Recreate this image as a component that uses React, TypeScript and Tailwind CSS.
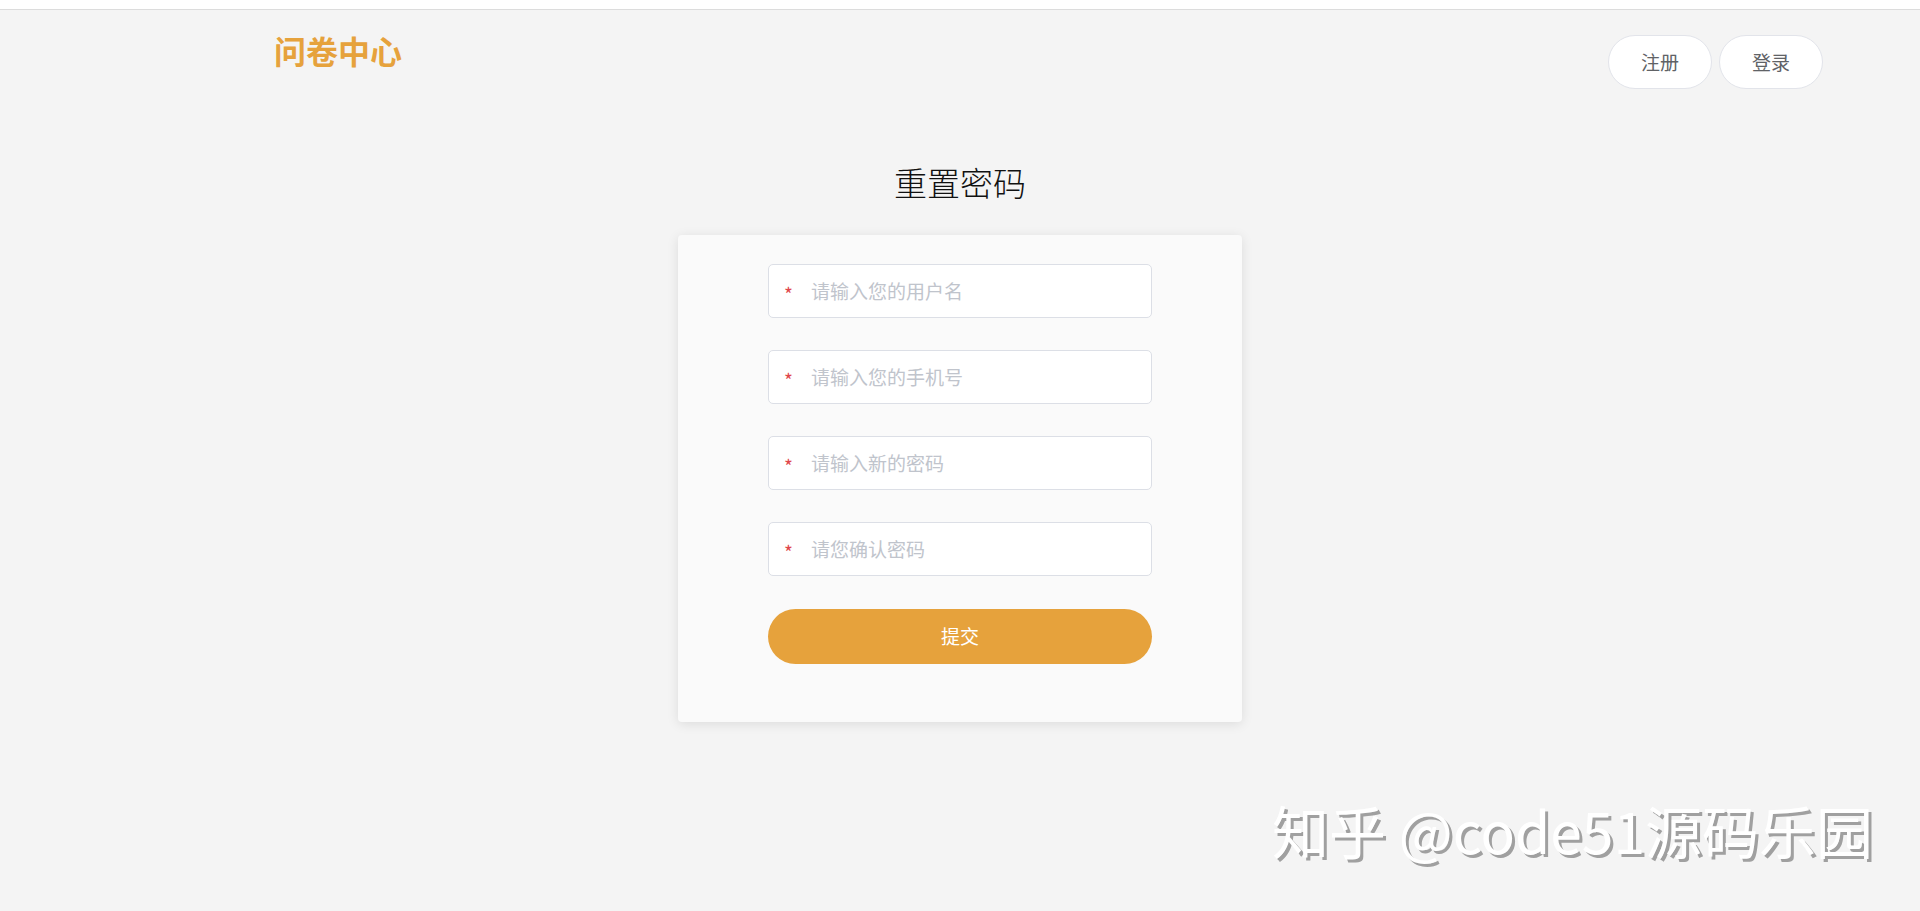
const fields = [
  { name: 'username', placeholder: '请输入您的用户名', type: 'text' },
  { name: 'phone', placeholder: '请输入您的手机号', type: 'text' },
  { name: 'password', placeholder: '请输入新的密码', type: 'password' },
  { name: 'confirm', placeholder: '请您确认密码', type: 'password' },
]

const font = { fontFamily: '"Noto Sans CJK SC", "Noto Sans", sans-serif' }

export default function App() {
  return (
    <div className="relative min-h-screen bg-[#f4f4f4]" style={font}>
      {/* top strip */}
      <div className="h-[10px] bg-white border-b border-[#dcdcdc]" />

      {/* header */}
      <header className="flex items-start justify-between pl-[274px] pr-[97px] pt-[25px]">
        <h1 className="mt-[-1px] text-[32px] leading-[32px] font-bold text-[#e6a23c]">问卷中心</h1>
        <div className="flex gap-[7px]">
          <button className="w-[104px] h-[54px] rounded-full bg-white border border-[#e2e4ea] text-[19px] text-[#606266]">
            注册
          </button>
          <button className="w-[104px] h-[54px] rounded-full bg-white border border-[#e2e4ea] text-[19px] text-[#606266]">
            登录
          </button>
        </div>
      </header>

      {/* reset form */}
      <main className="flex flex-col items-center">
        <h2 className="mt-[77px] text-[33px] leading-[32px] font-light text-[#111]">重置密码</h2>
        <div className="mt-[37px] w-[564px] rounded bg-[#fafafa] px-[90px] pt-[29px] pb-[58px] shadow-[0_2px_12px_0_rgba(0,0,0,0.1)]">
          <form className="flex flex-col gap-[32px]" onSubmit={(e) => e.preventDefault()}>
            {fields.map((f) => (
              <div
                key={f.name}
                className="flex h-[54px] items-center rounded-[5px] border border-[#dcdfe6] bg-white pl-[15px] pr-4"
              >
                <span className="w-[27px] pt-[4px] text-[19px] leading-none text-[#e0474a]">*</span>
                <input
                  type={f.type}
                  name={f.name}
                  placeholder={f.placeholder}
                  className="flex-1 bg-transparent text-[19px] text-[#606266] outline-none placeholder:text-[#c0c4cc]"
                />
              </div>
            ))}
            <button
              type="submit"
              className="mt-px h-[55px] w-full rounded-full bg-[#e6a23c] text-[19px] text-white"
            >
              提交
            </button>
          </form>
        </div>
      </main>

      {/* watermark */}
      <div className="absolute left-[1272px] top-[789px] text-[57px] leading-[80px] font-normal text-white [text-shadow:3px_3px_0_#a0a0a0] whitespace-nowrap">
        知乎 @code51源码乐园
      </div>
    </div>
  )
}
